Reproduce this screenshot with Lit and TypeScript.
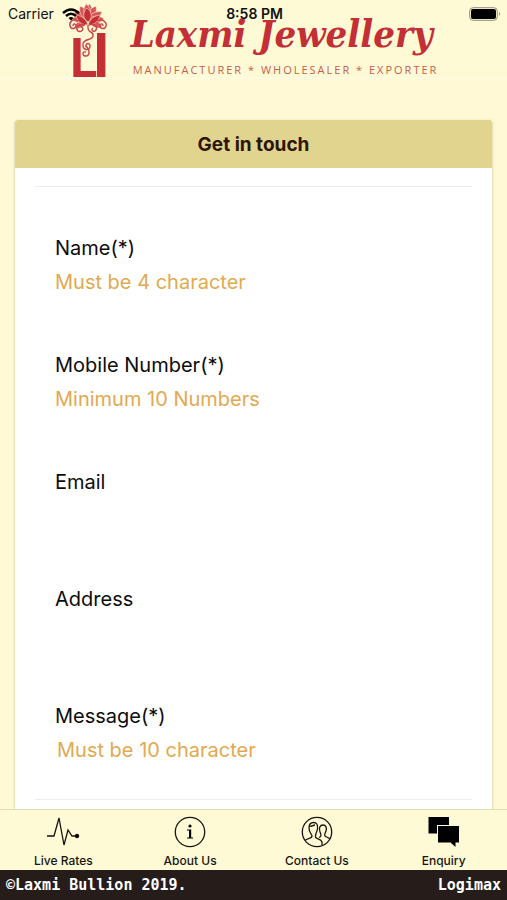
import { LitElement, html, css, svg } from "lit";
import { customElement } from "lit/decorators.js";

const icons = {
  rates: svg`<path d="M0 19H7L12 1L17 28L21 13L25 19H29" /><circle class="fill" cx="30" cy="19" r="1.6" />`,
  about: svg`<circle cx="16" cy="15" r="14.7" /><circle class="fill thin" cx="16" cy="9" r="1.6" /><path class="fill thin" d="M13 12.500H17.200V20.500H19V21.500H13V20.500H15V13.500H13Z" />`,
  contact: svg`<circle cx="16" cy="15" r="14.7" /><path d="M4 23.500C6 21 11 22 11 19C11 17 8 16 8 11C8 7 10 5.500 12.500 5.500C16 5.500 17 8 16.500 12C16 15 14 17 14.500 20C15 22 20 22 21 25V28M18 20.500C21 19.500 20 17 19 15C17.500 11 19 8 22 8C25 8 26 11 25 14C24 17 23 17 24 19C24.500 20 27 20 29 22M9 9C11 10 12 8 14 8" />`,
  enquiry: svg`<path class="fill thin" d="M0.500 0H21V8H9V16.500H0.500Z" /><path class="fill thin" d="M10 9H31V25.500H27.500V30L22.500 25.500H10Z" />`,
};

const tabs = [
  { label: "Live Rates", icon: icons.rates, href: "#rates" },
  { label: "About Us", icon: icons.about, href: "#about" },
  { label: "Contact Us", icon: icons.contact, href: "#contact" },
  { label: "Enquiry", icon: icons.enquiry, href: "#enquiry" },
];

const fields = [
  { id: "name", label: "Name(*)", hint: "Must be 4 character", type: "text" },
  { id: "mobile", label: "Mobile Number(*)", hint: "Minimum 10 Numbers", type: "tel" },
  { id: "email", label: "Email", hint: "", type: "email" },
  { id: "address", label: "Address", hint: "", type: "text" },
];

@customElement("status-bar")
export class StatusBar extends LitElement {
  static styles = css`
    :host {
      display: grid;
      grid-template-columns: 1fr auto 1fr;
      align-items: center;
      height: 28px;
      padding: 0 6px 0 8px;
      box-sizing: border-box;
      font-size: 14px;
      line-height: 20px;
      color: #111;
    }
    .carrier { display: flex; align-items: center; gap: 8px; }
    .time { font-weight: 600; }
    .battery { justify-self: end; display: block; }
  `;
  render() {
    return html`
      <span class="carrier">Carrier
        <svg width="18" height="13" viewBox="0 0 18 13" fill="none" stroke="#000" stroke-width="2.400">
          <path d="M1 5Q9 -2 17 5M4 8Q9 3.500 14 8" /><path d="M6.500 10Q9 8 11.500 10L9 12.500Z" fill="#000" stroke="none" />
        </svg>
      </span>
      <span class="time">8:58 PM</span>
      <svg class="battery" width="32" height="14" viewBox="0 0 32 14">
        <rect x="0.700" y="0.700" width="27.600" height="12.600" rx="3.500" fill="none" stroke="#8f8c78" />
        <rect x="2" y="2" width="25" height="10" rx="2" /><path d="M30 5Q32 7 30 9Z" fill="#8f8c78" />
      </svg>`;
  }
}

@customElement("brand-logo")
export class BrandLogo extends LitElement {
  static styles = css`
    :host { display: flex; justify-content: center; gap: 24px; color: #c32f35; }
    .mark { width: 38px; height: 75px; display: block; overflow: visible; }
    .initial { font-family: Lato, sans-serif; font-weight: bold; font-size: 54px; fill: currentColor; }
    .tall { font-size: 62px; }
    .words { display: flex; flex-direction: column; white-space: nowrap; padding-top: 3px; }
    .name { font: italic bold 38px/56px "DejaVu Serif Condensed", "DejaVu Serif", serif; }
    .tagline { font: 11px/16px "Open Sans", sans-serif; letter-spacing: 2px; color: #cb5b50; padding-left: 2px; }
  `;
  render() {
    const petals = [-84, -60, -30, -4, 28, 150, 184, 210, 240, 264];
    return html`
      <svg class="mark" viewBox="0 0 38 75">
        <g fill="#d4585a" stroke="#fff0d0" stroke-width="0.500">
          ${petals.map((a) => svg`<path d="M0 0C5 -5 12 -4 16 0C12 4 5 5 0 0Z" transform="translate(19 17) rotate(${a})" />`)}
          <path fill="#c32f35" d="M19 19C13 15 14 9 18 5C23 9 24 15 19 19Z" />
          <path fill="#c32f35" d="M19 22C12 22 8 18 7 12C13 13 17 16 19 22Z" />
          <path fill="#c32f35" d="M19 22C26 22 30 18 31 12C25 13 21 16 19 22Z" />
        </g>
        <g fill="none" stroke="#c9474a" stroke-width="1.400">
          <path d="M9 18C4 15 0 19 1 23C2 27 8 26 7 22C6 20 4 21 4 23" />
          <path d="M16 22C10 20 6 25 9 28C13 30 16 25 12 24" />
          <path d="M19 22C18 32 25 27 24 33C23 38 15 35 14 41C13 47 21 49 21 43C21 39 16 40 17 44" />
          <path d="M17 43C22 48 20 53 17 53C13 53 13 48 17 49" />
          <path d="M20 22C25 20 29 23 27 27C25 30 21 27 24 25" />
          <path d="M28 18C33 15 38 19 37 23C36 27 30 26 31 22C32 20 34 21 34 23" />
        </g>
        <text class="initial" x="0" y="74">L</text>
        <text class="initial tall" x="23" y="74">I</text>
      </svg>
      <div class="words">
        <span class="name">Laxmi Jewellery</span>
        <span class="tagline">MANUFACTURER * WHOLESALER * EXPORTER</span>
      </div>`;
  }
}

@customElement("enquiry-form")
export class EnquiryForm extends LitElement {
  static styles = css`
    :host { display: block; }
    .card { margin: 0 15px; background: #fff; border-radius: 3px; box-shadow: 0 1px 3px rgba(90, 80, 20, 0.35); overflow: hidden; }
    .title { margin: 0; padding: 13px 12px 11px; text-align: center; background: #e1d48f; color: #2c1607; font-size: 19px; line-height: 24px; font-weight: 700; }
    .body { padding: 18px 20px; }
    .rows { border: solid #ededed; border-width: 1px 0; padding: 27px 20px 0; }
    .field { display: flex; flex-direction: column; height: 117px; padding-top: 20px; box-sizing: border-box; }
    label { font-size: 20px; line-height: 28px; color: #0c0c0c; }
    input, textarea {
      font: inherit; font-size: 20px; line-height: 24px; height: 40px; padding: 8px 0; margin: 0;
      border: 0; outline: 0; background: none; box-sizing: border-box; width: 100%; resize: none; color: #0c0c0c;
    }
    textarea { padding-left: 2px; overflow: hidden; }
    ::placeholder { color: #e2a951; opacity: 1; }
  `;
  render() {
    return html`
      <form class="card">
        <h1 class="title">Get in touch</h1>
        <div class="body">
          <div class="rows">
            ${fields.map((f) => html`<div class="field">
              <label for=${f.id}>${f.label}</label>
              <input id=${f.id} type=${f.type} placeholder=${f.hint} />
            </div>`)}
            <div class="field">
              <label for="message">Message(*)</label>
              <textarea id="message" placeholder="Must be 10 character"></textarea>
            </div>
          </div>
        </div>
      </form>`;
  }
}

@customElement("tab-bar")
export class TabBar extends LitElement {
  static styles = css`
    :host { display: block; }
    .tabs { display: grid; grid-template-columns: repeat(4, 1fr); background: #fefad6; border-top: 1px solid #e0dcb9; }
    .tab { display: flex; flex-direction: column; align-items: center; gap: 5px; padding: 7px 0 1px; color: #17150f; text-decoration: none; font-size: 12px; line-height: 16px; font-weight: 500; }
    .icon { width: 32px; height: 31px; fill: none; stroke: #17150f; stroke-width: 1.3; overflow: visible; }
    .fill { fill: #000; }
    .thin { stroke: none; }
  `;
  render() {
    return html`<nav class="tabs">
      ${tabs.map((t) => html`<a class="tab" href=${t.href}>
        <svg class="icon" viewBox="0 0 32 31">${t.icon}</svg>${t.label}</a>`)}
    </nav>`;
  }
}

@customElement("app-root")
export class AppRoot extends LitElement {
  static styles = css`
    :host { display: flex; flex-direction: column; height: 100vh; background: #fffad5; font-family: Inter, sans-serif; }
    .header { position: relative; padding: 3px 0 0; background: #fefad6; border-bottom: 1px solid #fffbea; }
    .status { position: absolute; top: 0; left: 0; right: 0; }
    .main { flex: 1; min-height: 0; overflow: hidden; padding-top: 41px; }
    .footer { display: flex; justify-content: space-between; padding: 5px 6px; background: #261d1a; color: #fff; font: bold 15px/20px "DejaVu Sans Mono", monospace; }
  `;
  render() {
    return html`
      <header class="header">
        <brand-logo></brand-logo>
        <status-bar class="status"></status-bar>
      </header>
      <main class="main"><enquiry-form></enquiry-form></main>
      <tab-bar></tab-bar>
      <footer class="footer"><span>©Laxmi Bullion 2019.</span><span>Logimax</span></footer>`;
  }
}
